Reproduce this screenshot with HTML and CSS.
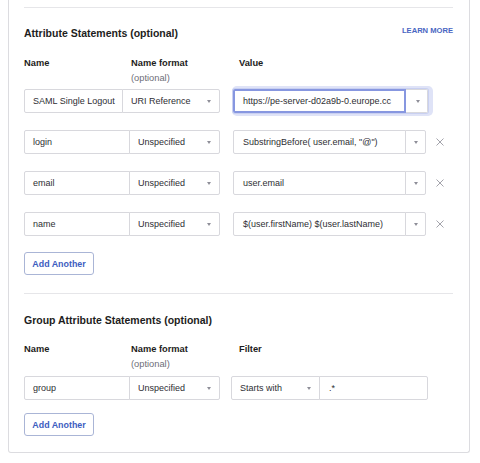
FILE: index.html
```html
<!DOCTYPE html>
<html>
<head>
<meta charset="utf-8">
<link rel="stylesheet" href="styles.css">
</head>
<body>
<div class="card">
  <section class="sec sec-attr">
    <div class="sec-head">
      <h2 class="title">Attribute Statements (optional)</h2>
      <a class="learn">LEARN MORE</a>
    </div>
    <div class="hdr">
      <div class="hc">Name</div>
      <div class="hc">Name format<span class="opt">(optional)</span></div>
      <div class="hc">Value</div>
    </div>

    <div class="row first">
      <div class="box name w-short">SAML Single Logout</div>
      <div class="box sel s-wide">URI Reference<span class="tri"></span></div>
      <div class="vgroup focus">
        <div class="box val">https://pe-server-d02a9b-0.europe.cc</div>
        <div class="box arrow"><span class="tri"></span></div>
      </div>
    </div>

    <div class="row">
      <div class="box name">login</div>
      <div class="box sel">Unspecified<span class="tri"></span></div>
      <div class="vgroup">
        <div class="box val">SubstringBefore( user.email, "@")</div>
        <div class="box arrow"><span class="tri"></span></div>
      </div>
      <svg class="x" viewBox="0 0 8 8" width="8" height="8"><path d="M0.5 0.5 L7.5 7.5 M7.5 0.5 L0.5 7.5" stroke="#a3a3ab" stroke-width="1" fill="none"/></svg>
    </div>

    <div class="row">
      <div class="box name">email</div>
      <div class="box sel">Unspecified<span class="tri"></span></div>
      <div class="vgroup">
        <div class="box val">user.email</div>
        <div class="box arrow"><span class="tri"></span></div>
      </div>
      <svg class="x" viewBox="0 0 8 8" width="8" height="8"><path d="M0.5 0.5 L7.5 7.5 M7.5 0.5 L0.5 7.5" stroke="#a3a3ab" stroke-width="1" fill="none"/></svg>
    </div>

    <div class="row">
      <div class="box name">name</div>
      <div class="box sel">Unspecified<span class="tri"></span></div>
      <div class="vgroup">
        <div class="box val">$(user.firstName) $(user.lastName)</div>
        <div class="box arrow"><span class="tri"></span></div>
      </div>
      <svg class="x" viewBox="0 0 8 8" width="8" height="8"><path d="M0.5 0.5 L7.5 7.5 M7.5 0.5 L0.5 7.5" stroke="#a3a3ab" stroke-width="1" fill="none"/></svg>
    </div>

    <button class="add">Add Another</button>
  </section>

  <section class="sec sec-group">
    <div class="sec-head">
      <h2 class="title">Group Attribute Statements (optional)</h2>
    </div>
    <div class="hdr">
      <div class="hc">Name</div>
      <div class="hc">Name format<span class="opt">(optional)</span></div>
      <div class="hc">Filter</div>
    </div>
    <div class="row first">
      <div class="box name">group</div>
      <div class="box sel">Unspecified<span class="tri"></span></div>
      <div class="box fsel">Starts with<span class="tri"></span></div>
      <div class="box finput">.*</div>
    </div>
    <button class="add add-group">Add Another</button>
  </section>
</div>
</body>
</html>
```

FILE: styles.css
```css
* { box-sizing: border-box; }
html, body {
  margin: 0;
  padding: 0;
  background: #ffffff;
}
body {
  font-family: "Liberation Sans", Arial, sans-serif;
  color: #1d1d21;
  width: 480px;
  height: 463px;
  overflow: hidden;
}
.card {
  margin-left: 8px;
  width: 462px;
  padding: 7px 16px 16px 15px;
  border: 1px solid #dcdce0;
  border-top: none;
  border-radius: 0 0 3px 3px;
  background: #fff;
}
.sec {
  border-top: 1px solid #e6e6e9;
}
.sec-attr {
  padding-top: 18px;
  padding-bottom: 18px;
}
.sec-group {
  padding-top: 19px;
}
.sec-head {
  display: flex;
  justify-content: space-between;
  align-items: flex-start;
  height: 14px;
}
.title {
  margin: 0;
  font-size: 10.5px;
  line-height: 14px;
  font-weight: 700;
  color: #1d1d21;
}
.learn {
  font-size: 7.6px;
  line-height: 10px;
  font-weight: 700;
  color: #4966c2;
  letter-spacing: 0;
}
.hdr {
  display: grid;
  grid-template-columns: 107px 108px auto;
  margin-top: 16px;
}
.sec-group .hdr { margin-top: 15px; }
.hc {
  font-size: 9.3px;
  line-height: 15px;
  font-weight: 700;
  color: #1d1d21;
}
.opt {
  display: block;
  font-weight: 400;
  color: #6e6e78;
}
.row {
  display: flex;
  align-items: center;
  height: 24px;
  margin-top: 17px;
}
.row.first { margin-top: 3px; }
.sec-group .row.first { margin-top: 4px; }
.box {
  position: relative;
  height: 24px;
  border: 1px solid #d8d8dd;
  font-size: 9px;
  line-height: 22px;
  color: #2e2e33;
  padding: 0 8px;
  white-space: nowrap;
  overflow: hidden;
  background: #fff;
}
.name {
  width: 106px;
  border-radius: 2px 0 0 2px;
}
.name.w-short { width: 99px; }
.sel {
  width: 91px;
  margin-left: -1px;
  border-radius: 0 2px 2px 0;
}
.sel.s-wide { width: 98px; }
.tri {
  position: absolute;
  right: 8px;
  top: 10px;
  width: 0;
  height: 0;
  border-left: 2.5px solid transparent;
  border-right: 2.5px solid transparent;
  border-top: 3px solid #8e8e98;
}
.vgroup {
  display: flex;
  margin-left: 13px;
  border-radius: 2px;
}
.val {
  width: 173px;
  border-radius: 2px 0 0 2px;
  padding: 0 9px;
  text-overflow: clip;
}
.arrow {
  width: 21px;
  margin-left: -1px;
  border-radius: 0 2px 2px 0;
}
.arrow .tri { right: 7px; }
.vgroup.focus {
  box-shadow: 0 0 0 1px #c9d0f1, 2px 0 0 3px #dfe3f7;
}
.vgroup.focus .val {
  border: 2px solid #8797e0;
  line-height: 20px;
  padding: 0 8px;
}
.vgroup.focus .arrow {
  width: 22px;
  margin-left: 0;
  border-left: none;
}
.x {
  margin-left: 10px;
  width: 8px;
  height: 8px;
}
.fsel {
  width: 89px;
  margin-left: 11px;
  border-radius: 2px 0 0 2px;
}
.finput {
  width: 109px;
  margin-left: -1px;
  border-radius: 0 2px 2px 0;
  padding: 0 9px;
}
.add {
  display: block;
  margin-top: 16px;
  width: 70px;
  height: 23px;
  padding: 0;
  border: 1px solid #aab5d6;
  border-radius: 3px;
  background: #fff;
  font-family: "Liberation Sans", Arial, sans-serif;
  font-size: 8.9px;
  font-weight: 700;
  color: #3d5dbf;
  text-align: center;
}
.add-group { margin-top: 13px; }
```
